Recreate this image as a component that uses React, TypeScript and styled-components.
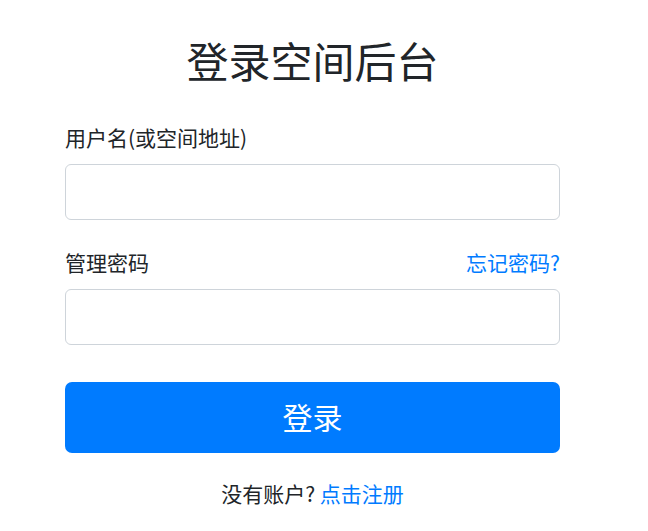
import React from "react";
import styled, { createGlobalStyle } from "styled-components";

const Global = createGlobalStyle`
  html, body { margin: 0; padding: 0; background: #fff; }
  body {
    font-family: "Noto Sans CJK SC", "Noto Sans", sans-serif;
    color: #212529;
  }
`;

const Page = styled.div`
  padding: 28px 0 0 65px;
`;

const Form = styled.form`
  width: 495px;
  display: flex;
  flex-direction: column;
`;

const Title = styled.h1`
  margin: 0 0 30px;
  font-size: 42px;
  font-weight: 400;
  line-height: 64px;
  text-align: center;
`;

const LabelRow = styled.div`
  display: flex;
  justify-content: space-between;
  align-items: center;
  height: 30px;
  margin-bottom: 12px;
`;

const Label = styled.label`
  font-size: 21px;
  line-height: 30px;
  color: #212529;
`;

const Link = styled.a`
  font-size: 21px;
  line-height: 30px;
  color: #007bff;
  text-decoration: none;
`;

const Input = styled.input<{ $mb: number }>`
  box-sizing: border-box;
  height: 56px;
  width: 100%;
  border: 1px solid #ced4da;
  border-radius: 6px;
  padding: 0 16px;
  font-size: 20px;
  margin: 0 0 ${(p) => p.$mb}px;
  outline: none;
`;

const Button = styled.button`
  height: 71px;
  width: 100%;
  border: none;
  border-radius: 7px;
  background: #007bff;
  color: #fff;
  font-family: inherit;
  font-size: 30px;
  padding: 0 0 4px;
  cursor: pointer;
  margin-bottom: 25px;
`;

const Footer = styled.div`
  text-align: center;
  font-size: 21px;
  line-height: 30px;
`;

export default function App() {
  return (
    <>
      <Global />
      <Page>
        <Form onSubmit={(e) => e.preventDefault()}>
          <Title>登录空间后台</Title>
          <LabelRow>
            <Label>用户名(或空间地址)</Label>
          </LabelRow>
          <Input type="text" $mb={27} />
          <LabelRow>
            <Label>管理密码</Label>
            <Link href="#">忘记密码?</Link>
          </LabelRow>
          <Input type="password" $mb={37} />
          <Button type="submit">登录</Button>
          <Footer>
            没有账户? <Link href="#">点击注册</Link>
          </Footer>
        </Form>
      </Page>
    </>
  );
}
